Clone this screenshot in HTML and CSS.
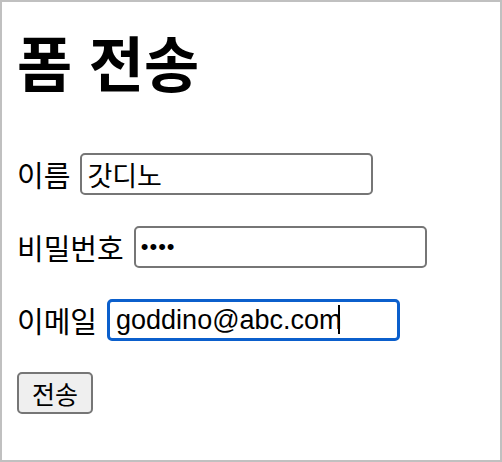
FILE: index.html
```html
<!DOCTYPE html>
<html lang="ko">
<head>
    <meta charset="UTF-8">
    <title>폼 전송</title>
    <link rel="stylesheet" href="styles.css">
</head>
<body>
<div class="page">
    <h1 class="title">폼 전송</h1>
    <form class="form" action="#" method="post">
        <div class="row">
            <label for="userName">이름</label>
            <input type="text" id="userName" name="name" value="갓디노"/>
        </div>
        <div class="row">
            <label for="userPass">비밀번호</label>
            <input type="password" id="userPass" class="pass" name="pass" value="1234"/>
        </div>
        <div class="row">
            <label for="userEmail">이메일</label>
            <span class="field">
                <input type="text" id="userEmail" class="focus" name="email" value="goddino@abc.com"/>
                <i class="caret"></i>
            </span>
        </div>
        <div class="row">
            <button type="submit" class="submit">전송</button>
        </div>
    </form>
</div>
</body>
</html>
```

FILE: styles.css
```css
* {
    margin: 0;
    padding: 0;
    box-sizing: border-box;
}

html, body {
    width: 100%;
    height: 100%;
    overflow: hidden;
    background: #fff;
}

body {
    font-family: "Liberation Sans", "Noto Sans CJK KR", sans-serif;
    color: #000;
}

.page {
    height: 100%;
    border: 2px solid #c0c0c0;
    padding: 25px 15px 0;
}

.title {
    font-size: 60px;
    font-weight: bold;
    line-height: 80px;
    margin-bottom: 46px;
}

.row {
    display: flex;
    align-items: center;
    gap: 10px;
    margin-bottom: 31px;
    height: 42px;
}

.row label {
    font-size: 29px;
}

.row input {
    width: 293px;
    height: 42px;
    padding: 0 5px;
    border: 2px solid #767676;
    border-radius: 5px;
    font-family: "Liberation Sans", "Noto Sans CJK KR", sans-serif;
    font-size: 27px;
    color: #000;
    outline: none;
}

.row input.pass {
    font-size: 22px;
    letter-spacing: 1px;
}

.row input.focus {
    border: 3px solid #0b5fcc;
    padding: 0 6px;
}

.field {
    position: relative;
    display: block;
    height: 42px;
}

.caret {
    position: absolute;
    left: 231px;
    top: 6px;
    width: 2px;
    height: 29px;
    background: #000;
}

.submit {
    width: 76px;
    height: 42px;
    border: 2px solid #767676;
    border-radius: 5px;
    background: #efefef;
    font-family: "Liberation Sans", "Noto Sans CJK KR", sans-serif;
    font-size: 25px;
    color: #000;
}
```
